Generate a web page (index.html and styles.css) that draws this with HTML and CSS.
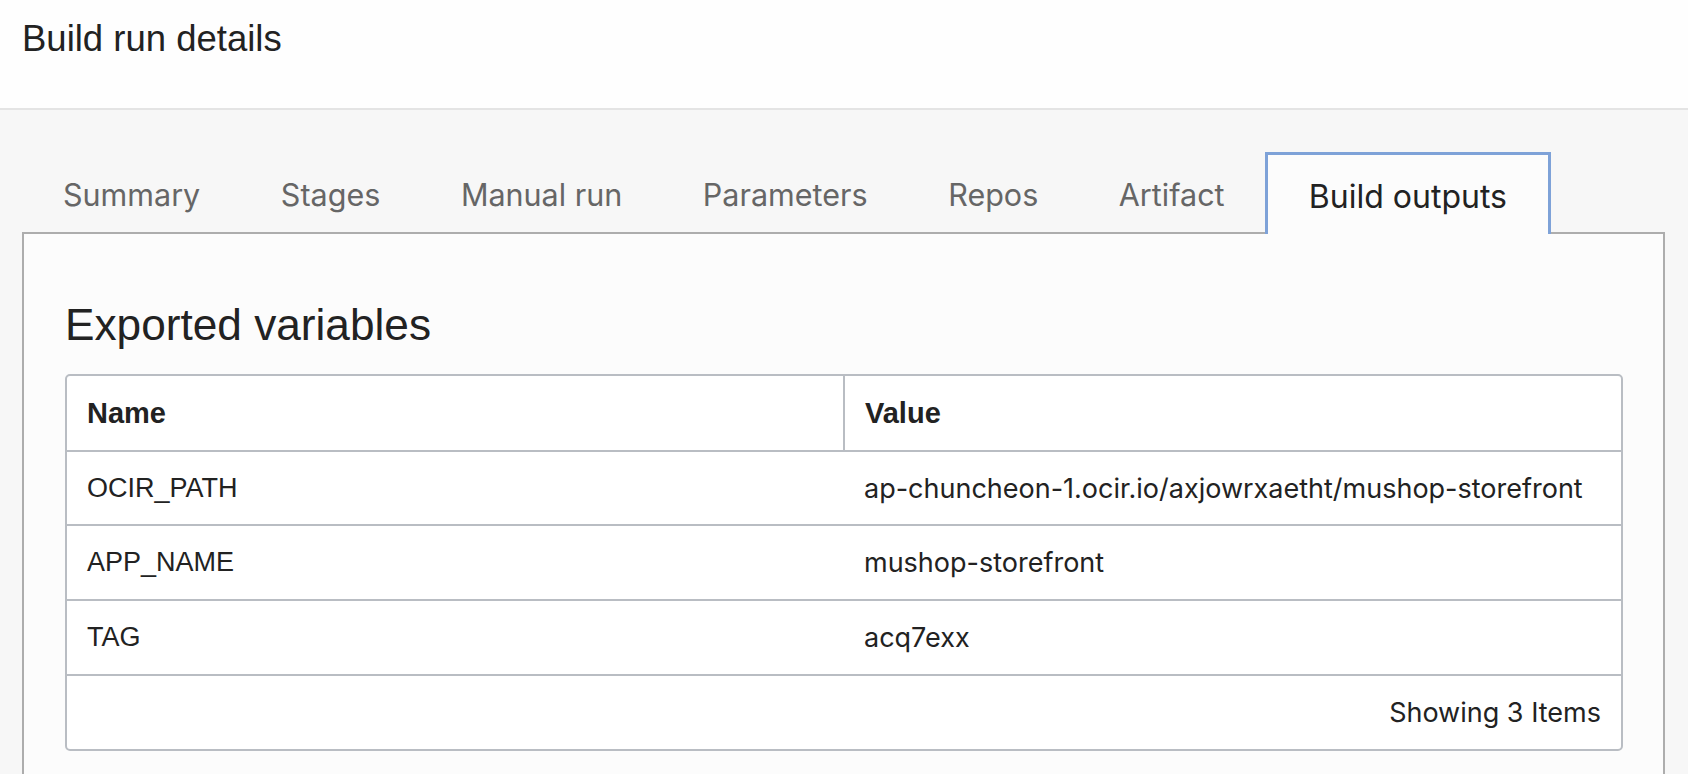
FILE: index.html
```html
<!DOCTYPE html>
<html lang="en">
<head>
<meta charset="utf-8">
<title>Build run details</title>
<link rel="stylesheet" href="styles.css">
</head>
<body>
<header class="topbar">
  <h1 class="title">Build run details</h1>
</header>
<main class="main">
  <nav class="tabs">
    <div class="tab">Summary</div>
    <div class="tab">Stages</div>
    <div class="tab">Manual run</div>
    <div class="tab">Parameters</div>
    <div class="tab">Repos</div>
    <div class="tab">Artifact</div>
    <div class="tab active">Build outputs</div>
  </nav>
  <section class="panel">
    <h2 class="heading">Exported variables</h2>
    <div class="grid-wrap">
      <table class="grid">
        <thead>
          <tr><th class="col-name">Name</th><th class="col-value">Value</th></tr>
        </thead>
        <tbody>
          <tr><td class="name">OCIR_PATH</td><td class="value">ap-chuncheon-1.ocir.io/axjowrxaetht/mushop-storefront</td></tr>
          <tr><td class="name">APP_NAME</td><td class="value">mushop-storefront</td></tr>
          <tr><td class="name">TAG</td><td class="value">acq7exx</td></tr>
        </tbody>
        <tfoot>
          <tr><td colspan="2" class="footer">Showing 3 Items</td></tr>
        </tfoot>
      </table>
    </div>
  </section>
</main>
</body>
</html>
```

FILE: styles.css
```css
* { box-sizing: border-box; }

html, body {
  margin: 0;
  padding: 0;
  background: #f7f7f7;
  color: #222;
  font-family: "Liberation Sans", Arial, sans-serif;
  overflow: hidden;
}

.topbar {
  background: #fefefe;
  height: 110px;
  border-bottom: 2px solid #e4e4e4;
  padding: 21px 0 0 22px;
}

.title {
  margin: 0;
  font-weight: 400;
  font-size: 36.5px;
  line-height: 1;
  color: #222;
}

.main {
  padding: 42px 23px 0 22px;
}

.tabs {
  display: flex;
  align-items: flex-end;
  border-bottom: 2px solid #adadad;
  height: 82px;
}

.tab {
  height: 80px;
  padding: 4px 40.3px 0;
  display: flex;
  align-items: center;
  font-family: "Inter", "Liberation Sans", sans-serif;
  font-size: 30.5px;
  color: #666;
  white-space: nowrap;
}

.tab:first-child {
  padding-left: 41px;
}

.tab.active {
  height: 82px;
  margin-bottom: -2px;
  border: 3px solid #7ea2d8;
  border-bottom: 0;
  background: #fcfcfc;
  color: #222;
  font-size: 32px;
  padding: 4px 41px 0;
}

.panel {
  background: #fcfcfc;
  border: 2px solid #adadad;
  border-top: 0;
  padding: 69px 40px 40px 41px;
  min-height: 600px;
}

.heading {
  margin: 0 0 27px;
  font-weight: 400;
  font-size: 44.2px;
  line-height: 1;
  color: #222;
}

.grid-wrap {
  border: 2px solid #b9bdc3;
  border-radius: 5px;
  background: #fff;
  overflow: hidden;
}

.grid {
  width: 100%;
  border-collapse: collapse;
  table-layout: fixed;
}

.grid th,
.grid td {
  height: 74.6px;
  padding: 0 20px;
  text-align: left;
  vertical-align: middle;
  border-bottom: 2px solid #b9bdc3;
  white-space: nowrap;
}

.grid th {
  font-weight: 700;
  font-size: 29px;
}

.grid th.col-name {
  border-right: 2px solid #b9bdc3;
}

.grid td.name {
  font-size: 27px;
}

.grid td.value {
  font-family: "Inter", "Liberation Sans", sans-serif;
  font-size: 27px;
}

.grid tfoot td {
  border-bottom: 0;
  text-align: right;
  font-family: "Inter", "Liberation Sans", sans-serif;
  font-size: 27px;
}
```
